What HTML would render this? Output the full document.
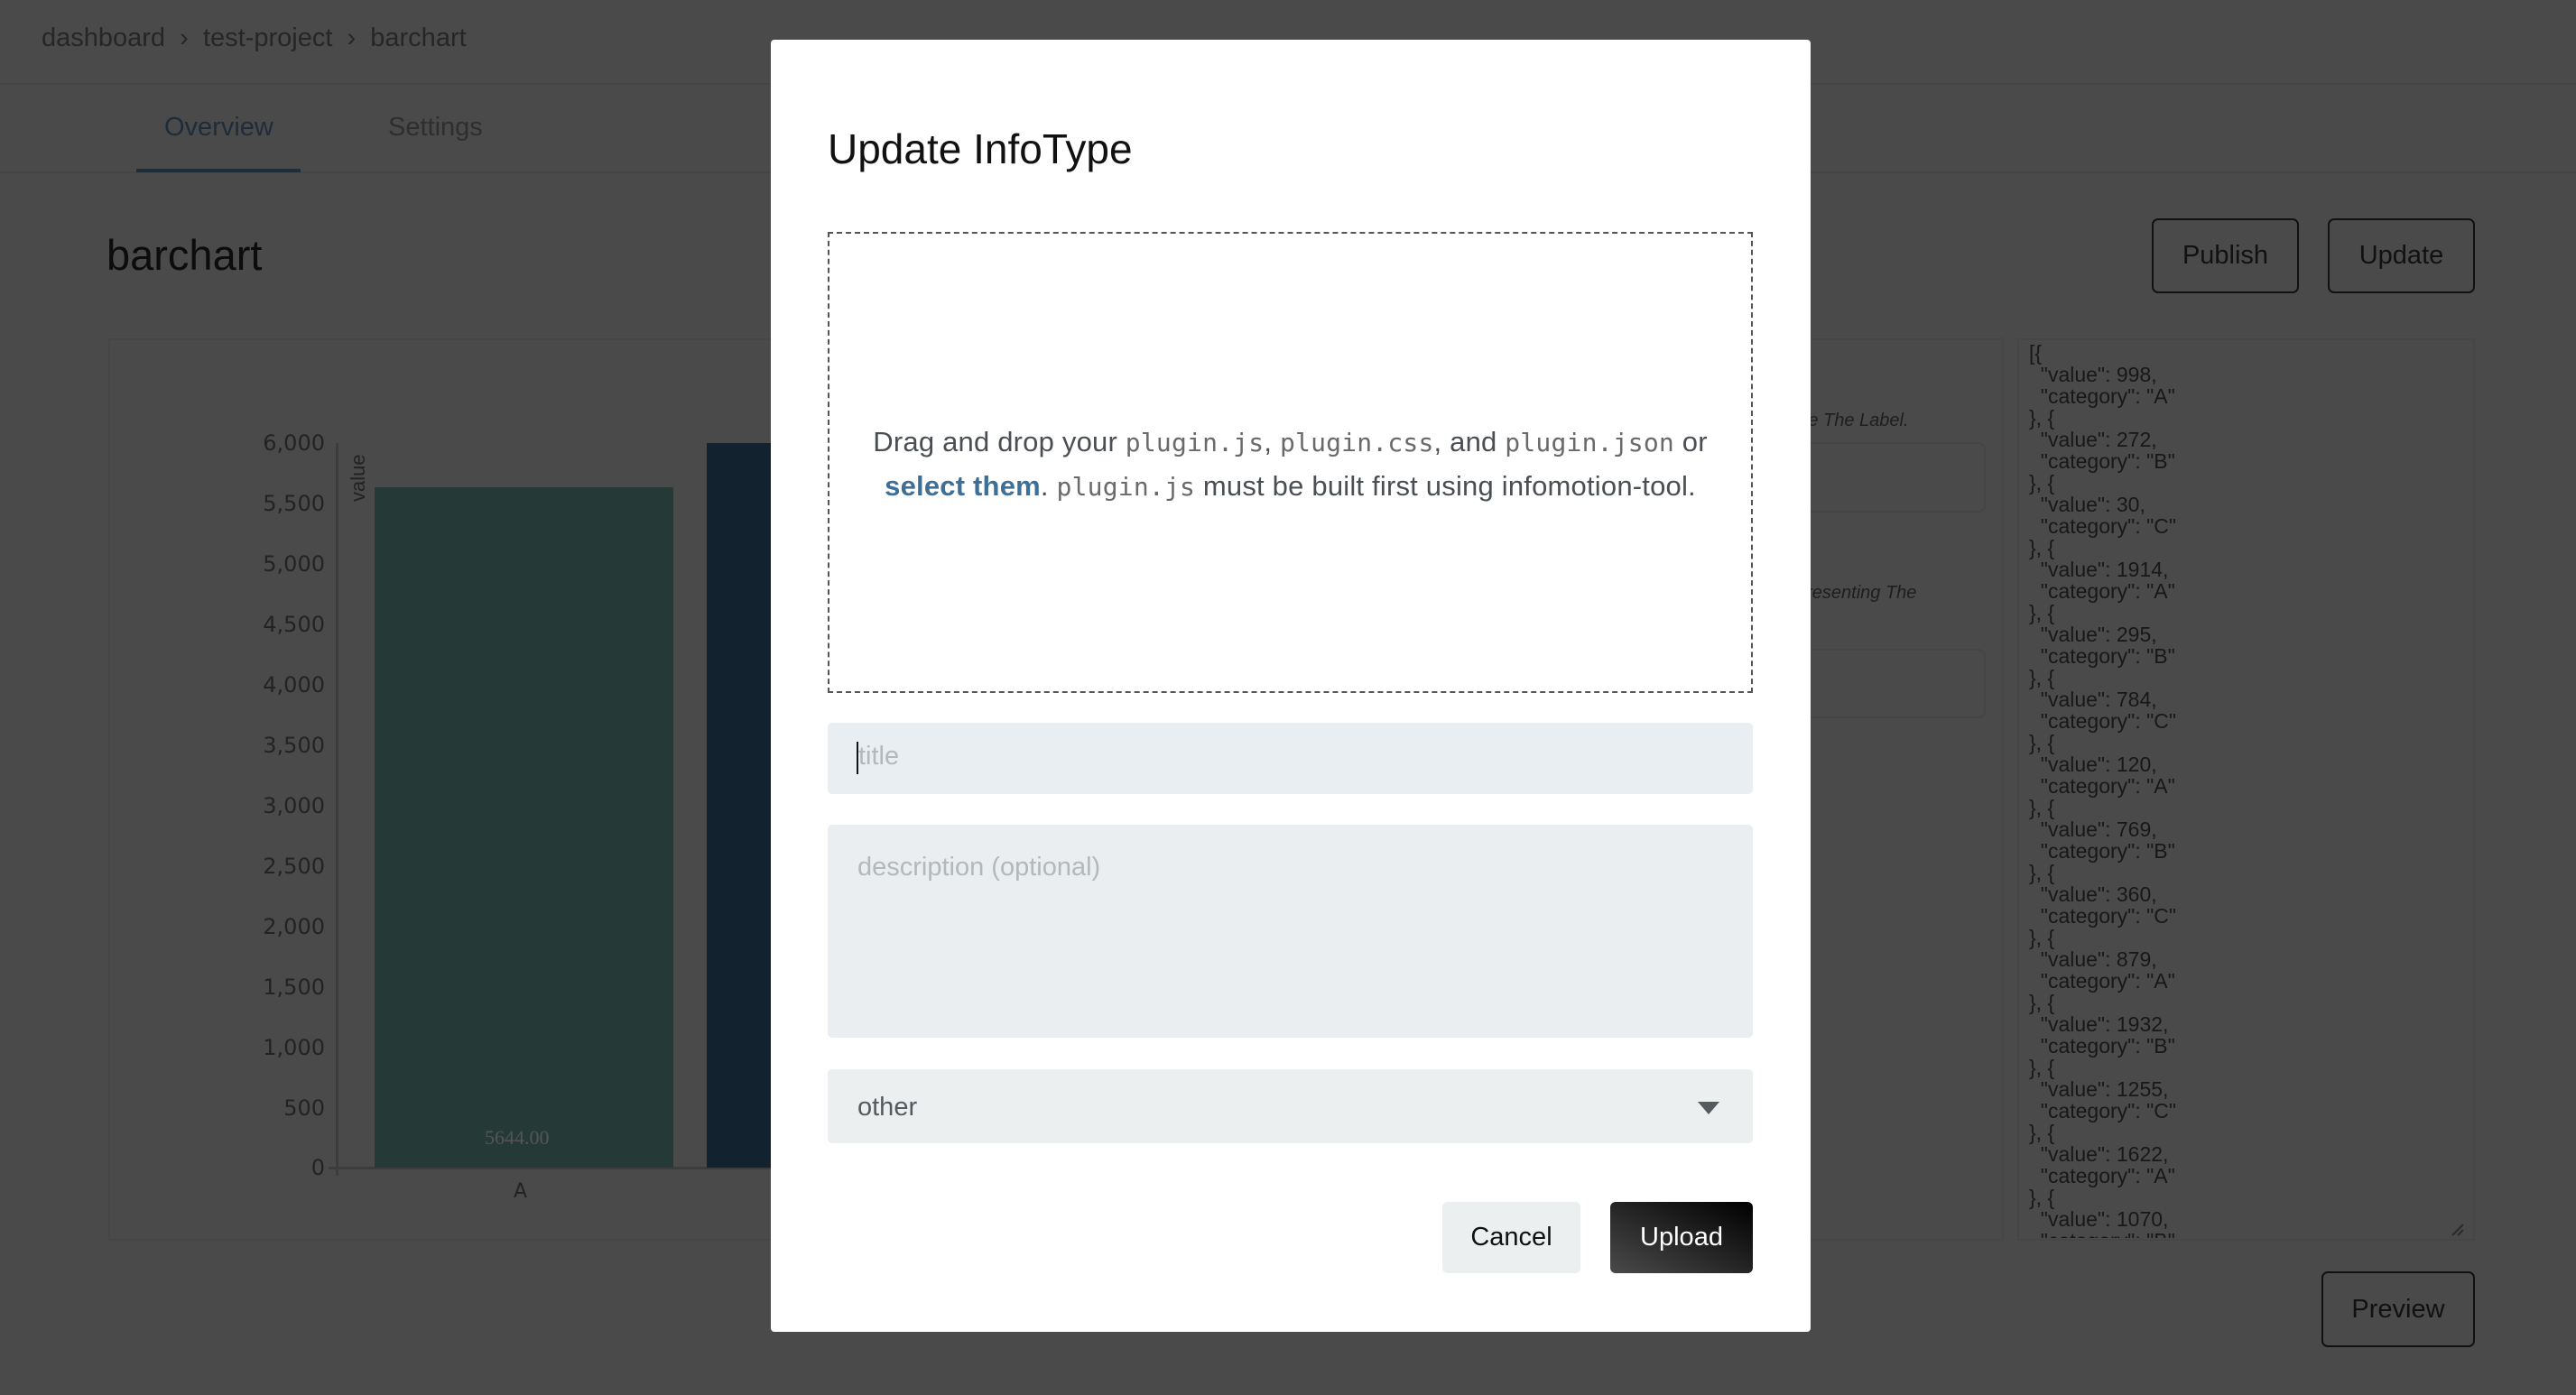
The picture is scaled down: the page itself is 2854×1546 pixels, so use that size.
<!DOCTYPE html>
<html><head><meta charset="utf-8"><style>
*{margin:0;padding:0;box-sizing:border-box}
html,body{width:2854px;height:1546px;overflow:hidden;background:#4a4a4a;font-family:"Liberation Sans",sans-serif}
.a{position:absolute}
.btn{position:absolute;border:2px solid #111;border-radius:7px;color:#111;font-size:29px;display:flex;align-items:center;justify-content:center}
.tick{position:absolute;right:0;font-family:"DejaVu Sans",sans-serif;font-size:24px;color:#232323;transform:translateY(-50%)}
.json{position:absolute;left:2237px;top:377px;width:503px;height:995px;overflow:hidden;padding:2px 0 0 11px;font-size:23px;line-height:24px;color:#181818;white-space:pre;font-family:"Liberation Sans",sans-serif}
.mono{font-family:"DejaVu Sans Mono","Liberation Mono",monospace;color:#6a6a6a;font-size:28px}
</style></head><body>
<!-- background page -->
<div class="a" style="left:46px;top:26px;font-size:29px;color:#262626">dashboard&nbsp; › &nbsp;test-project&nbsp; › &nbsp;barchart</div>
<div class="a" style="left:0;top:92px;width:2854px;height:2px;background:#454545"></div>
<div class="a" style="left:182px;top:125px;font-size:29px;color:#1e2c3a">Overview</div>
<div class="a" style="left:430px;top:125px;font-size:29px;color:#2e2e2e">Settings</div>
<div class="a" style="left:0;top:190px;width:2854px;height:2px;background:#454545"></div>
<div class="a" style="left:151px;top:187px;width:182px;height:4px;background:#1e2d3a"></div>
<div class="a" style="left:118px;top:255px;font-size:47px;color:#0c0c0c">barchart</div>
<div class="btn" style="left:2384px;top:242px;width:163px;height:83px">Publish</div>
<div class="btn" style="left:2579px;top:242px;width:163px;height:83px">Update</div>

<div class="a" style="left:120px;top:375px;width:2100px;height:1000px;border:2px solid #464646"></div>
<div class="a" style="left:2235px;top:375px;width:507px;height:1000px;border:2px solid #464646"></div>
<div class="a" style="left:1990px;top:455px;font-size:20px;font-style:italic;color:#1e1e1e">Be The Label.</div>
<div class="a" style="left:1960px;top:490px;width:240px;height:78px;border:2px solid #454545;border-radius:8px"></div>
<div class="a" style="left:1990px;top:646px;font-size:20px;font-style:italic;color:#1e1e1e">presenting The</div>
<div class="a" style="left:1960px;top:719px;width:240px;height:77px;border:2px solid #454545;border-radius:8px"></div>

<div class="json">[{
  "value": 998,
  "category": "A"
}, {
  "value": 272,
  "category": "B"
}, {
  "value": 30,
  "category": "C"
}, {
  "value": 1914,
  "category": "A"
}, {
  "value": 295,
  "category": "B"
}, {
  "value": 784,
  "category": "C"
}, {
  "value": 120,
  "category": "A"
}, {
  "value": 769,
  "category": "B"
}, {
  "value": 360,
  "category": "C"
}, {
  "value": 879,
  "category": "A"
}, {
  "value": 1932,
  "category": "B"
}, {
  "value": 1255,
  "category": "C"
}, {
  "value": 1622,
  "category": "A"
}, {
  "value": 1070,
  "category": "B"
}</div>
<svg class="a" style="left:2715px;top:1355px" width="16" height="16"><path d="M2 14L14 2M8 14L14 8" stroke="#2a2a2a" stroke-width="2"/></svg>
<div class="btn" style="left:2572px;top:1409px;width:170px;height:84px">Preview</div>

<!-- chart -->
<div class="a" style="left:160px;top:470px;width:200px;height:850px">
<div class="tick" style="top:21px">6,000</div>
<div class="tick" style="top:88px">5,500</div>
<div class="tick" style="top:155px">5,000</div>
<div class="tick" style="top:222px">4,500</div>
<div class="tick" style="top:289px">4,000</div>
<div class="tick" style="top:356px">3,500</div>
<div class="tick" style="top:423px">3,000</div>
<div class="tick" style="top:490px">2,500</div>
<div class="tick" style="top:557px">2,000</div>
<div class="tick" style="top:624px">1,500</div>
<div class="tick" style="top:691px">1,000</div>
<div class="tick" style="top:758px">500</div>
<div class="tick" style="top:824px">0</div>
</div>
<div class="a" style="left:372px;top:491px;width:3px;height:812px;background:#3c3c3c"></div>
<div class="a" style="left:364px;top:1293px;width:500px;height:3px;background:#3c3c3c"></div>
<div class="a" style="left:384px;top:556px;font-size:22px;color:#222;transform:rotate(-90deg);transform-origin:left top">value</div>
<div class="a" style="left:415px;top:540px;width:331px;height:754px;background:#253a36"></div>
<div class="a" style="left:783px;top:491px;width:80px;height:803px;background:#12222e"></div>
<div class="a" style="left:537px;top:1248px;font-family:'Liberation Serif',serif;font-size:22px;color:#555">5644.00</div>
<div class="a" style="left:569px;top:1308px;font-family:'DejaVu Sans',sans-serif;font-size:22px;color:#222">A</div>

<!-- modal -->
<div class="a" style="left:854px;top:44px;width:1152px;height:1432px;background:#fff;border-radius:4px"></div>
<div class="a" style="left:917px;top:138px;font-size:46px;color:#111">Update InfoType</div>
<div class="a" style="left:917px;top:257px;width:1025px;height:511px;border:2px dashed #555"></div>
<div class="a" style="left:919px;top:466px;width:1021px;text-align:center;font-size:31px;line-height:48px;color:#4a4f55;letter-spacing:0.2px">Drag and drop your <span class="mono">plugin.js</span>, <span class="mono">plugin.css</span>, and <span class="mono">plugin.json</span> or<br><span style="color:#3e6f97;font-weight:bold">select them</span>. <span class="mono">plugin.js</span> must be built first using infomotion-tool.</div>
<div class="a" style="left:917px;top:801px;width:1025px;height:79px;background:#e8eef1;border-radius:5px"></div>
<div class="a" style="left:949px;top:822px;width:2px;height:36px;background:#111"></div>
<div class="a" style="left:951px;top:822px;font-size:29px;color:#b3b8bb">title</div>
<div class="a" style="left:917px;top:914px;width:1025px;height:236px;background:#eaeef0;border-radius:5px"></div>
<div class="a" style="left:950px;top:945px;font-size:29px;color:#b3b8bb">description (optional)</div>
<div class="a" style="left:917px;top:1185px;width:1025px;height:82px;background:#eceff0;border-radius:5px"></div>
<div class="a" style="left:950px;top:1211px;font-size:29px;color:#555a5e">other</div>
<svg class="a" style="left:1881px;top:1221px" width="24" height="15"><path d="M0 0H24L12 14Z" fill="#555a5e"/></svg>
<div class="a" style="left:1598px;top:1332px;width:153px;height:79px;background:#eceff0;border-radius:6px;display:flex;align-items:center;justify-content:center;font-size:29px;color:#111">Cancel</div>
<div class="a" style="left:1784px;top:1332px;width:158px;height:79px;background:linear-gradient(to top right,#4a4a4a,#000);border-radius:6px;display:flex;align-items:center;justify-content:center;font-size:29px;color:#fff">Upload</div>
</body></html>
